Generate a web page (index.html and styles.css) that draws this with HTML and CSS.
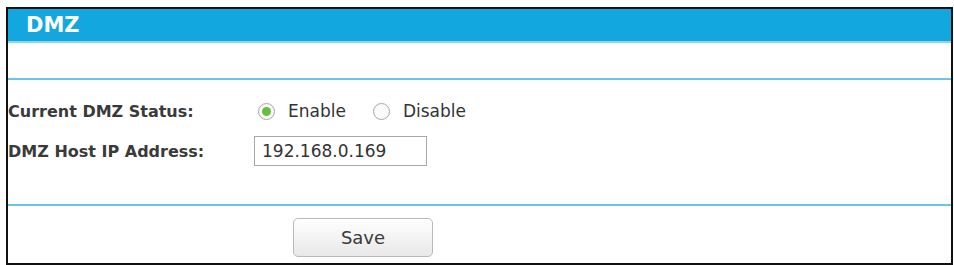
FILE: index.html
```html
<!DOCTYPE html>
<html>
<head>
<meta charset="utf-8">
<link rel="stylesheet" href="styles.css">
</head>
<body>
<div class="frame">
  <div class="header">DMZ</div>
  <div class="spacer"></div>
  <div class="content">
    <div class="row">
      <div class="label">Current DMZ Status:</div>
      <div class="value">
        <label class="radio"><span class="dot checked"></span><span class="rtext">Enable</span></label>
        <label class="radio second"><span class="dot"></span><span class="rtext">Disable</span></label>
      </div>
    </div>
    <div class="row">
      <div class="label">DMZ Host IP Address:</div>
      <div class="value">
        <div class="ipbox">192.168.0.169</div>
      </div>
    </div>
  </div>
  <div class="footer">
    <button class="save">Save</button>
  </div>
</div>
</body>
</html>
```
FILE: styles.css
```css
html, body {
  margin: 0;
  padding: 0;
  background: #ffffff;
}
body {
  padding: 7px 1px 0 6px;
  font-family: "DejaVu Sans", Verdana, sans-serif;
  color: #333333;
}
.frame {
  border: 2px solid #111111;
  width: 943px;
  height: 254px;
  box-sizing: content-box;
  display: flex;
  flex-direction: column;
}
.header {
  height: 32px;
  background: #12a7df;
  color: #ffffff;
  font-weight: bold;
  font-size: 21px;
  line-height: 33px;
  padding-left: 18px;
  border-bottom: 2px solid #8dd4f2;
}
.spacer {
  height: 35px;
  border-bottom: 2px solid #6cc4e8;
}
.content {
  padding: 11px 0 33px 0;
  border-bottom: 2px solid #6cc4e8;
}
.row {
  height: 40px;
  display: flex;
  align-items: center;
}
.label {
  width: 246px;
  font-weight: bold;
  font-size: 16px;
  color: #3a3a3a;
}
.value {
  display: flex;
  align-items: center;
  font-size: 17px;
}
.radio {
  display: flex;
  align-items: center;
  margin-left: 4px;
}
.radio.second {
  margin-left: 27px;
}
.dot {
  width: 15px;
  height: 15px;
  border: 1px solid #a8a8a8;
  border-radius: 50%;
  background: #fafafa;
  box-sizing: content-box;
  display: flex;
  align-items: center;
  justify-content: center;
}
.dot.checked::after {
  content: "";
  width: 9px;
  height: 9px;
  border-radius: 50%;
  background: #6abf3a;
}
.rtext {
  margin-left: 13px;
}
.ipbox {
  width: 164px;
  height: 28px;
  border: 1px solid #a9a9a9;
  line-height: 28px;
  padding-left: 7px;
  font-size: 17px;
  color: #333333;
}
.footer {
  flex: 1;
  padding-top: 12px;
}
.save {
  margin-left: 285px;
  width: 140px;
  height: 39px;
  border: 1px solid #b9b9b9;
  border-radius: 5px;
  background: linear-gradient(#ffffff, #e8e8e8);
  font-family: "DejaVu Sans", Verdana, sans-serif;
  font-size: 18px;
  color: #3a3a3a;
  padding: 0;
}
```
